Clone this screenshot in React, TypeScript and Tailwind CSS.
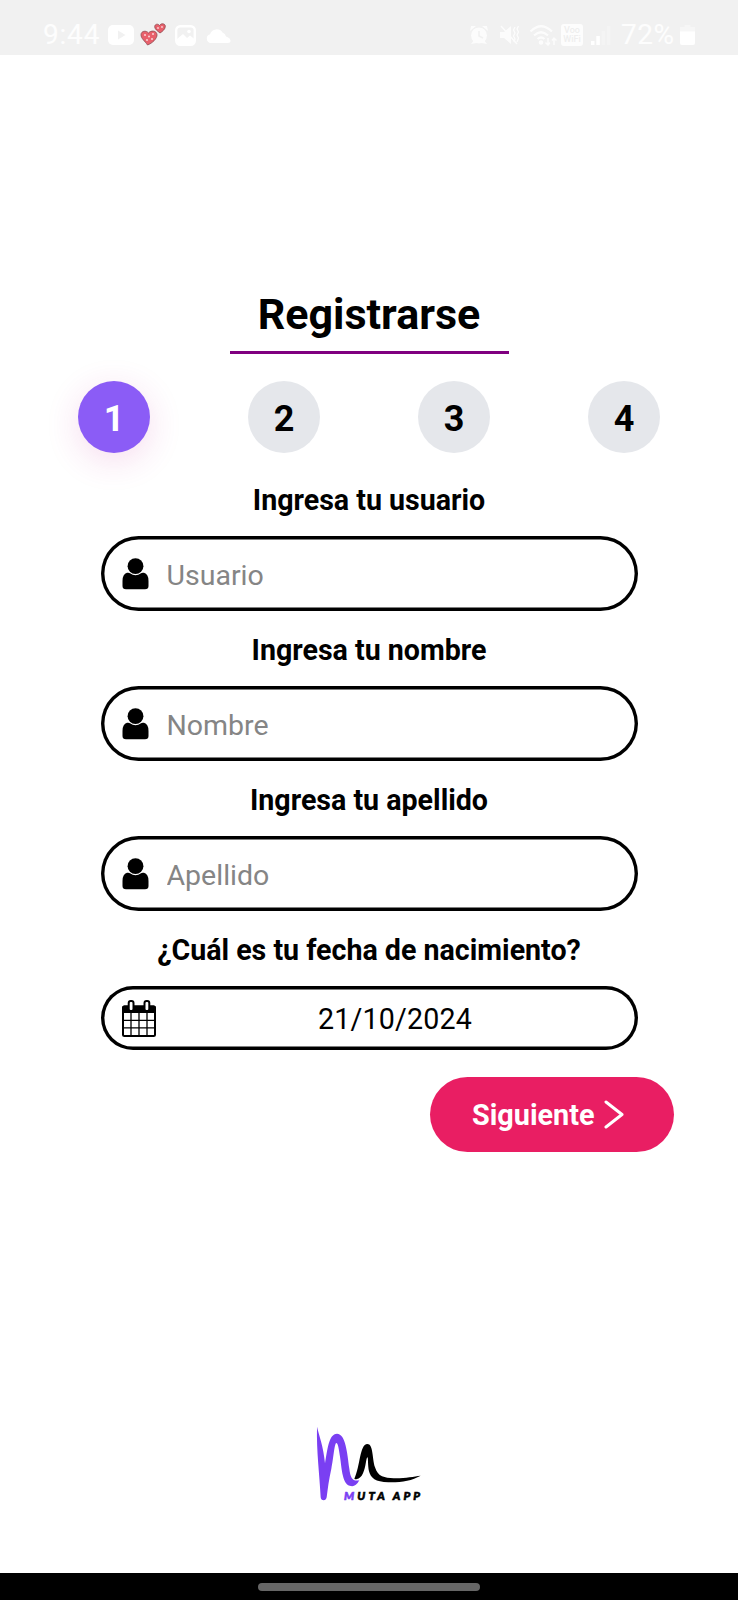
import React from "react";

function StatusBar() {
  return (
    <header className="flex h-[55px] items-center justify-between bg-[#f1f1f1] pl-[43px] pr-[43px] pt-[15px] text-white/85">
      <div className="flex h-[40px] items-center">
        <span className="w-[65px] text-[28px] leading-[40px] tracking-[0.8px]">9:44</span>
        <svg width="26" height="20" viewBox="0 0 26 20" className="shrink-0">
          <rect width="26" height="20" rx="5" fill="white" />
          <path d="M10 5.500 17.500 10 10 14.500Z" fill="#f1f1f1" />
        </svg>
        <svg width="26" height="24" viewBox="0 0 26 24" className="ml-[6px] shrink-0">
          <g fill="#e8606b" stroke="#8d4a50" strokeWidth="0.8">
            <path d="M7.500 22C5 18 .8 15.500 1 11.500C1.200 8 6 7 8.500 10C11 7 16.500 7.500 17 11.500C17.400 15.500 12 20.500 7.500 22Z" />
            <path d="M20 10C17.500 8 14.500 6 14.700 3.500C15 .8 18 .5 19.500 2.500C21 0 25 .3 25.300 3C25.500 6 22.500 8.500 20 10Z" />
          </g>
          <g fill="#fbd3d6">
            <circle cx="5" cy="12" r="1" /><circle cx="9" cy="13.500" r="1" /><circle cx="13" cy="11" r="1" />
            <circle cx="7" cy="17" r="1" /><circle cx="12" cy="16" r="1" /><circle cx="18" cy="5" r=".9" /><circle cx="22" cy="4" r=".9" />
          </g>
        </svg>
        <svg width="21" height="21" viewBox="0 0 21 21" className="ml-[9px] shrink-0">
          <rect x="1.200" y="1.200" width="18.600" height="18.600" rx="4" fill="none" stroke="white" strokeWidth="2.400" />
          <path d="M2 14 8 9l4 4 3-2.500 5 4V18q-1 2-3 2H4q-2 0-2-2Z" fill="white" />
          <circle cx="14" cy="6.500" r="1.800" fill="white" />
        </svg>
        <svg width="25" height="15" viewBox="0 0 25 15" className="ml-[10px] shrink-0">
          <path d="M5 15A4.500 4.500 0 0 1 4 6.200 7 7 0 0 1 16.500 4.500 5.500 5.500 0 0 1 20 8.500Q25 10 24.500 13.500 24 15 21 15Z" fill="white" />
        </svg>
      </div>
      <div className="flex h-[40px] items-center">
        <svg width="20" height="20" viewBox="0 0 20 20" className="shrink-0 opacity-80">
          <circle cx="10" cy="10.500" r="8" fill="white" />
          <path d="M2 1h5L1 6ZM18 1h-5l6 5ZM2 19l3-4 3 3ZM18 19l-3-4-3 3Z" fill="white" />
          <path d="M10 6v5l4 2" fill="none" stroke="#f1f1f1" strokeWidth="1.500" />
        </svg>
        <svg width="21" height="22" viewBox="0 0 21 22" className="ml-[10px] shrink-0 opacity-80" fill="none" stroke="white">
          <path d="M1 8h4l7-6v18l-7-6H1Z" fill="white" stroke="none" />
          <path d="m2 2 16 18" strokeWidth="1.500" />
          <path d="m16 3-1.500 3L16 9l-1.500 3L16 15l-1 3M19.500 2 18 5l1.500 3L18 11l1.500 3L18 18" strokeWidth="1.400" />
        </svg>
        <svg width="29" height="22" viewBox="0 0 29 22" className="ml-[9px] shrink-0 opacity-80" fill="none" stroke="white" strokeWidth="2.200">
          <path d="M1.500 7.500Q12 -3 23 7.500M5 11.500Q12 5 19 11.500M8.500 15Q12 12 15.500 15" />
          <circle cx="12" cy="18.500" r="1.200" fill="white" />
          <path d="M19 14v7m-2.500-2.500L19 21l2-2.500M25 21v-7m-2 2.500 2-2.500 2.500 2.500" strokeWidth="1.500" />
        </svg>
        <div className="ml-[3px] flex h-[22px] w-[22px] flex-col items-center justify-center rounded-[3px] bg-white/85 text-[9px] font-medium leading-[9px] text-[#eeeeee]">
          <span>Voo</span>
          <span>WiFi</span>
        </div>
        <svg width="20" height="19" viewBox="0 0 20 19" className="ml-[8px] shrink-0" fill="white">
          <rect y="15" width="3.500" height="4" />
          <rect x="5.300" y="10" width="3.500" height="9" />
          <rect x="10.600" y="5" width="3.500" height="14" opacity=".25" />
          <rect x="16" width="3.500" height="19" opacity=".25" />
        </svg>
        <span className="ml-[10px] w-[57px] whitespace-nowrap text-[28px] leading-[40px] tracking-[0.5px]">72%</span>
        <svg width="15" height="20" viewBox="0 0 15 20" className="ml-[2px] shrink-0" fill="white">
          <path d="M4.500 0h6v2H15v5H0V2h4.500Z" opacity=".4" />
          <path d="M0 6.500h15V18q0 2-2 2H2q-2 0-2-2Z" />
        </svg>
      </div>
    </header>
  );
}

function UserIcon() {
  return (
    <svg width="27" height="32" viewBox="0 0 27 32" className="shrink-0">
      <path d="M5 14.800Q7 14.300 8 15.300Q13.500 19 19 15.300Q20 14.300 22 14.800Q26.500 16 26.500 23V28Q26.500 31.300 23 31.300H4Q.5 31.300.5 28V23Q.5 16 5 14.800Z" />
      <circle cx="13.500" cy="8.200" r="7.900" />
    </svg>
  );
}

function CalendarIcon() {
  return (
    <svg width="34" height="37" viewBox="0 0 34 37" className="shrink-0">
      <rect x="1" y="6.500" width="32" height="29.500" rx="1.500" fill="white" stroke="black" strokeWidth="2" />
      <path d="M0 13V8q0-2.500 2-2.500h30q2 0 2 2.500v5Z" />
      <path d="M9 13v22M17 13v22M25 13v22M1 20.300h32M1 27.800h32" stroke="black" strokeWidth="1.300" />
      <rect x="6.700" y="1" width="4.800" height="10" rx="2" fill="white" stroke="black" strokeWidth="2" />
      <rect x="22.500" y="1" width="4.800" height="10" rx="2" fill="white" stroke="black" strokeWidth="2" />
    </svg>
  );
}

const fields = [
  { label: "Ingresa tu usuario", placeholder: "Usuario" },
  { label: "Ingresa tu nombre", placeholder: "Nombre" },
  { label: "Ingresa tu apellido", placeholder: "Apellido" },
];

function Logo() {
  return (
    <div className="relative ml-[300px] h-[110px] w-[140px]">
      <svg width="140" height="110" viewBox="0 0 420 330">
        <path
          d="M51 50C58 80 70 108 75 160C82 122 86 71 111 71C137 71 142 130 148 176C151 203 158 215 178 211C169 227 160 231 149 227C125 220 125 166 119 134C116 112 113 99 109 99C103 101 101 142 94 176C87 207 83 237 80 262Q78 271 71 271Q63 271 62 262C59 195 49 125 51 50Z"
          fill="#7a3ff2"
        />
        <path
          d="M163 206C181 168 179 102 202 102C220 102 216 142 225 172C234 202 254 203 281 205C315 206 340 199 362 197C335 212 304 218 265 217C226 216 212 204 207 184C203 166 205 142 202 142C198 144 198 172 189 190C184 201 178 206 171 207Q166 209 163 206Z"
          fill="black"
        />
      </svg>
      <div className="absolute left-[44px] top-[78px] whitespace-nowrap font-[Lato,sans-serif] text-[11.500px] font-black italic leading-[16px] tracking-[3.100px] [-webkit-text-stroke:0.6px]">
        <span className="text-[#7a3ff2]">M</span>UTA APP
      </div>
    </div>
  );
}

export default function App() {
  return (
    <div className="flex h-[1600px] w-[738px] flex-col bg-white font-[Roboto,sans-serif] text-black">
      <StatusBar />
      <main className="flex flex-col pt-[234px]">
        <h1 className="mx-auto flex h-[65px] w-[279px] justify-center border-b-[3px] border-[#800080] text-[43px] font-bold leading-[50px]">
          Registrarse
        </h1>
        <ol className="mx-[78px] mt-[27px] flex justify-between text-[36px] font-bold">
          <li className="flex size-[72px] items-center justify-center rounded-full bg-[#8b5cf6] pt-[3px] text-white shadow-[0_8px_34px_rgba(200,40,150,0.16)]">1</li>
          <li className="flex size-[72px] items-center justify-center rounded-full bg-[#e5e7eb] pt-[3px]">2</li>
          <li className="flex size-[72px] items-center justify-center rounded-full bg-[#e5e7eb] pt-[3px]">3</li>
          <li className="flex size-[72px] items-center justify-center rounded-full bg-[#e5e7eb] pt-[3px]">4</li>
        </ol>
        <form className="mx-auto mt-[23px] flex w-[537px] flex-col">
          {fields.map((field) => (
            <label key={field.label} className="flex h-[150px] flex-col">
              <span className="h-[60px] pt-[7px] text-center text-[28.600px] font-bold leading-[34px]">{field.label}</span>
              <span className="flex h-[75px] items-center rounded-full pl-[21px] shadow-[inset_0_0_0_3.400px_#000]">
                <UserIcon />
                <input
                  className="ml-[18px] w-[420px] bg-transparent pt-[5px] text-[28.500px] outline-none placeholder:text-[#858585]"
                  placeholder={field.placeholder}
                />
              </span>
            </label>
          ))}
          <span className="h-[60px] pt-[7px] text-center text-[28.600px] font-bold leading-[34px]">¿Cuál es tu fecha de nacimiento?</span>
          <button type="button" className="flex h-[64px] items-center rounded-full pl-[21px] pr-[3px] shadow-[inset_0_0_0_3.400px_#000]">
            <CalendarIcon />
            <span className="flex-1 pt-[3px] text-center text-[28.600px] tracking-[0.200px]">21/10/2024</span>
          </button>
        </form>
        <button className="ml-[430px] mt-[27px] flex h-[75px] w-[244px] items-center rounded-full bg-[#e91e63] pl-[42px] text-[28.800px] font-bold text-white">
          <span className="pt-[3px]">Siguiente</span>
          <svg width="20" height="29" viewBox="0 0 20 29" className="ml-[9px]" fill="none" stroke="white" strokeWidth="3" strokeLinecap="round" strokeLinejoin="round">
            <path d="M2 2 18 14.500 2 27" />
          </svg>
        </button>
      </main>
      <footer className="mt-auto">
        <Logo />
        <div className="mt-[53px] flex h-[27px] justify-center bg-black pt-[10px]">
          <div className="h-[8px] w-[222px] rounded-full bg-[#666]" />
        </div>
      </footer>
    </div>
  );
}
